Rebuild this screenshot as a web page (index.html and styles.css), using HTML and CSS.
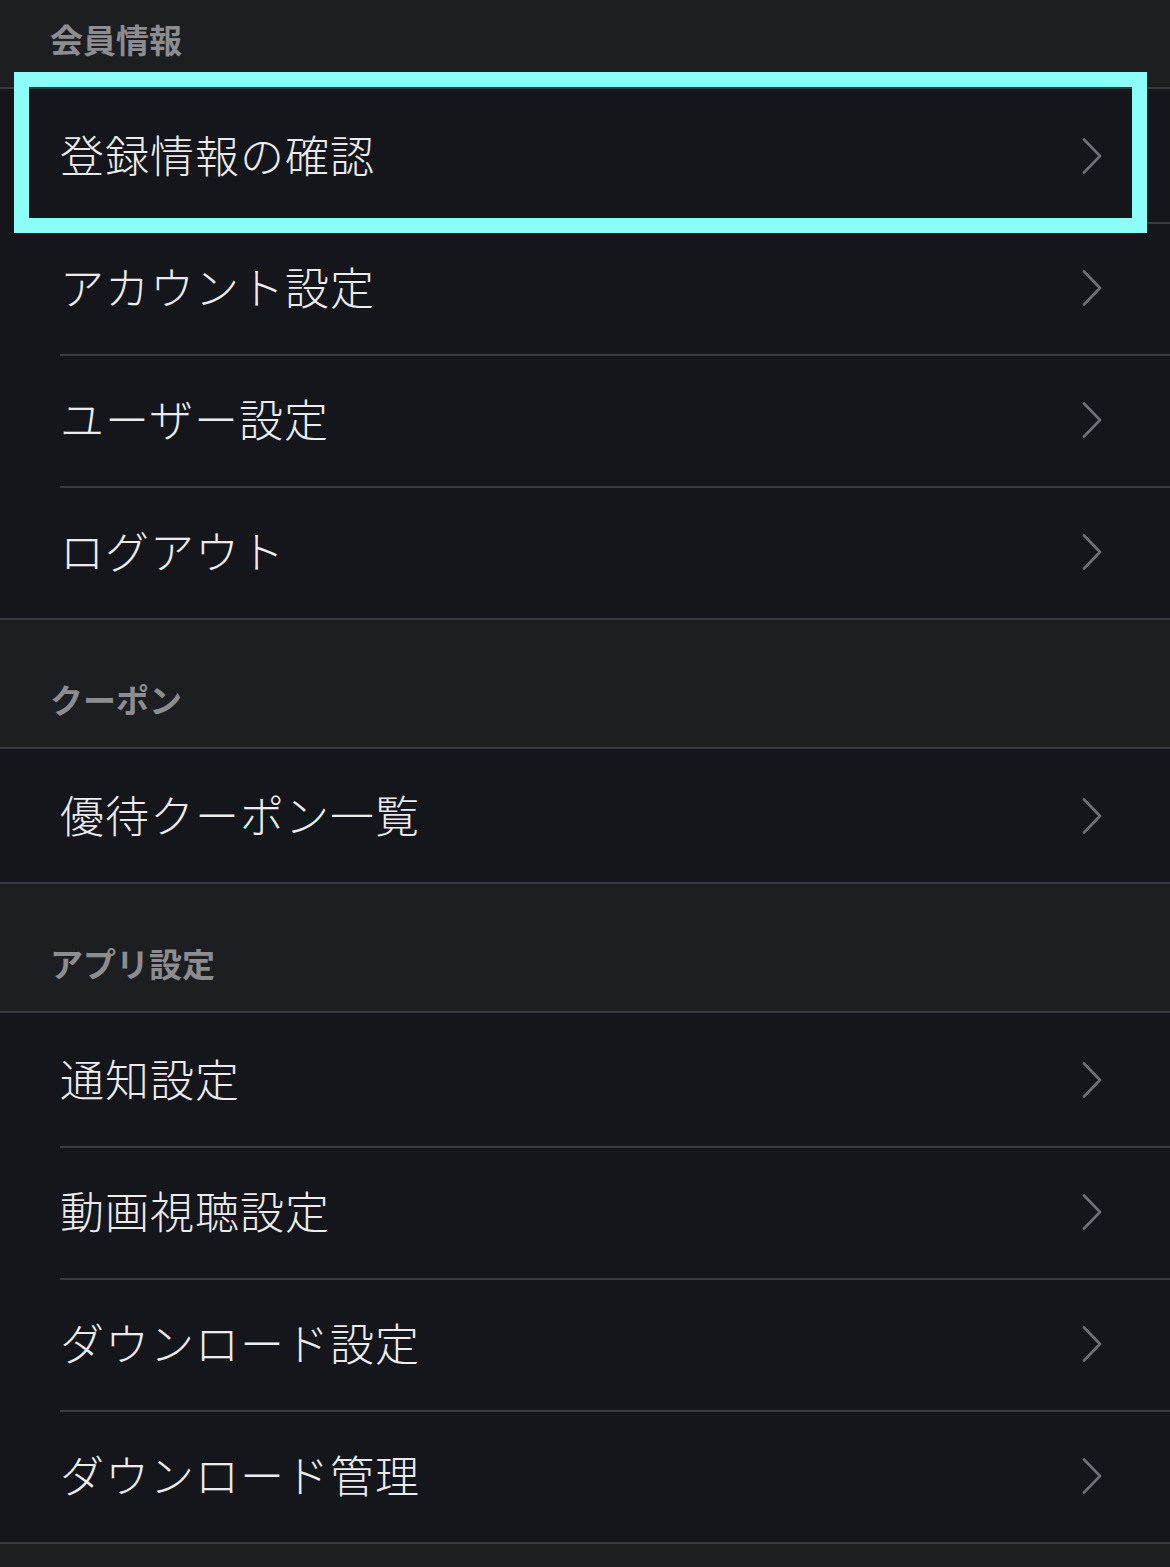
FILE: index.html
```html
<!DOCTYPE html>
<html lang="ja">
<head>
<meta charset="utf-8">
<title>設定</title>
<link rel="stylesheet" href="styles.css">
</head>
<body>
<div class="page">
  <div class="section-header first"><span>会員情報</span></div>
  <div class="group">
    <div class="row focused">
      <span class="label">登録情報の確認</span>
      <svg class="chev" viewBox="0 0 20 36" width="20" height="36"><polyline points="2,1.5 18,18 2,34.5"/></svg>
      <div class="focus-ring"></div>
    </div>
    <div class="row"><span class="label">アカウント設定</span><svg class="chev" viewBox="0 0 20 36" width="20" height="36"><polyline points="2,1.5 18,18 2,34.5"/></svg></div>
    <div class="row"><span class="label">ユーザー設定</span><svg class="chev" viewBox="0 0 20 36" width="20" height="36"><polyline points="2,1.5 18,18 2,34.5"/></svg></div>
    <div class="row"><span class="label">ログアウト</span><svg class="chev" viewBox="0 0 20 36" width="20" height="36"><polyline points="2,1.5 18,18 2,34.5"/></svg></div>
  </div>

  <div class="section-header"><span>クーポン</span></div>
  <div class="group">
    <div class="row"><span class="label">優待クーポン一覧</span><svg class="chev" viewBox="0 0 20 36" width="20" height="36"><polyline points="2,1.5 18,18 2,34.5"/></svg></div>
  </div>

  <div class="section-header"><span>アプリ設定</span></div>
  <div class="group">
    <div class="row"><span class="label">通知設定</span><svg class="chev" viewBox="0 0 20 36" width="20" height="36"><polyline points="2,1.5 18,18 2,34.5"/></svg></div>
    <div class="row"><span class="label">動画視聴設定</span><svg class="chev" viewBox="0 0 20 36" width="20" height="36"><polyline points="2,1.5 18,18 2,34.5"/></svg></div>
    <div class="row"><span class="label">ダウンロード設定</span><svg class="chev" viewBox="0 0 20 36" width="20" height="36"><polyline points="2,1.5 18,18 2,34.5"/></svg></div>
    <div class="row"><span class="label">ダウンロード管理</span><svg class="chev" viewBox="0 0 20 36" width="20" height="36"><polyline points="2,1.5 18,18 2,34.5"/></svg></div>
  </div>
  <div class="section-header tail"></div>
</div>
</body>
</html>
```

FILE: styles.css
```css
html, body {
  margin: 0;
  padding: 0;
  background: #1d1e22;
}

.page {
  width: 1170px;
  font-family: "Noto Sans CJK JP", "Noto Sans", sans-serif;
}

.section-header {
  box-sizing: border-box;
  display: flex;
  align-items: flex-end;
  padding: 0 0 31px 50px;
  background: #1d1e22;
  border-bottom: 2px solid #393a3f;
  height: 129px;
}

.section-header.first {
  height: 89px;
}

.section-header.tail {
  border-bottom: none;
  height: 40px;
}

.section-header span {
  font-size: 33px;
  line-height: 33px;
  font-weight: 700;
  color: #8d8d91;
}

.group {
  display: flex;
  flex-direction: column;
  background: #15161b;
}

.row {
  position: relative;
  height: 132px;
  box-sizing: border-box;
  display: flex;
  align-items: center;
  justify-content: space-between;
  padding: 0 68px 5px 60px;
  background: #15161b;
}

.row:first-child {
  height: 135px;
  padding-top: 3px;
}

.row::after {
  content: "";
  position: absolute;
  left: 60px;
  right: 0;
  bottom: 0;
  height: 2px;
  background: #393a3f;
}

.row:last-child::after {
  left: 0;
}

.label {
  font-size: 44px;
  line-height: 44px;
  font-weight: 300;
  color: #ececee;
  letter-spacing: 1px;
  margin-bottom: 3px;
}

.chev {
  display: block;
}

.chev polyline {
  fill: none;
  stroke: #717175;
  stroke-width: 2.6;
  stroke-linecap: round;
  stroke-linejoin: round;
}

.focus-ring {
  position: absolute;
  top: -17px;
  left: 14px;
  right: 23px;
  bottom: -9px;
  border: 15px solid #8cfdf7;
  pointer-events: none;
  z-index: 2;
}
```
